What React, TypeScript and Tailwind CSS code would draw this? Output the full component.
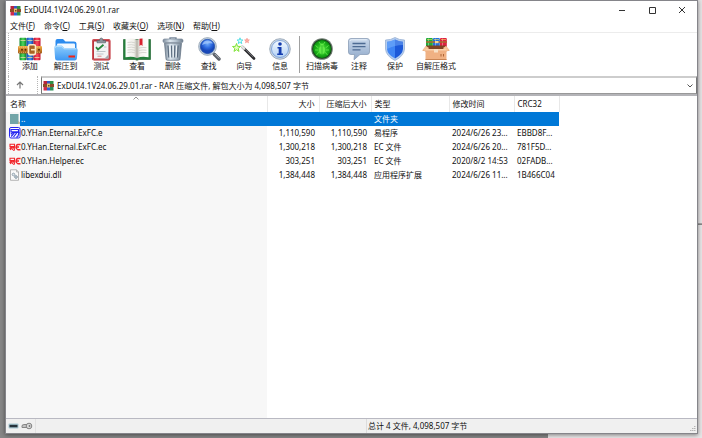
import { useState } from 'react';
import type { ReactNode } from 'react';

type FileRow = {
  name: string;
  icon: 'folder' | 'e' | 'ec' | 'dll';
  size: string;
  packed: string;
  type: string;
  modified: string;
  crc: string;
};

const files: FileRow[] = [
  { name: '..', icon: 'folder', size: '', packed: '', type: '文件夹', modified: '', crc: '' },
  { name: '0.YHan.Eternal.ExFC.e', icon: 'e', size: '1,110,590', packed: '1,110,590', type: '易程序', modified: '2024/6/26 23...', crc: 'EBBD8F...' },
  { name: '0.YHan.Eternal.ExFC.ec', icon: 'ec', size: '1,300,218', packed: '1,300,218', type: 'EC 文件', modified: '2024/6/26 20...', crc: '781F5D...' },
  { name: '0.YHan.Helper.ec', icon: 'ec', size: '303,251', packed: '303,251', type: 'EC 文件', modified: '2020/8/2 14:53', crc: '02FADB...' },
  { name: 'libexdui.dll', icon: 'dll', size: '1,384,448', packed: '1,384,448', type: '应用程序扩展', modified: '2024/6/26 11...', crc: '1B466C04' },
];

const menus = [
  { label: '文件', accel: 'F' },
  { label: '命令', accel: 'C' },
  { label: '工具', accel: 'S' },
  { label: '收藏夹', accel: 'O' },
  { label: '选项', accel: 'N' },
  { label: '帮助', accel: 'H' },
];

function BooksIcon() {
  return (
    <svg viewBox="0 0 24 24" className="size-6" aria-hidden="true">
      <defs>
        <linearGradient id="bookR"><stop offset="0" stopColor="#b01030" /><stop offset=".5" stopColor="#ff4a5e" /><stop offset="1" stopColor="#c0122f" /></linearGradient>
        <linearGradient id="bookG"><stop offset="0" stopColor="#0f8a2c" /><stop offset=".5" stopColor="#4fd85e" /><stop offset="1" stopColor="#0b7a26" /></linearGradient>
        <linearGradient id="bookB"><stop offset="0" stopColor="#1648a8" /><stop offset=".5" stopColor="#3f97f5" /><stop offset="1" stopColor="#123c94" /></linearGradient>
        <linearGradient id="belt" x2="0" y2="1"><stop offset="0" stopColor="#f0b04c" /><stop offset=".5" stopColor="#d08428" /><stop offset="1" stopColor="#9a5414" /></linearGradient>
      </defs>
      <rect x="1.500" y=".8" width="7" height="22.500" rx="1" fill="url(#bookG)" />
      <rect x="8.500" y=".8" width="7" height="22.500" rx="1" fill="url(#bookB)" />
      <rect x="15.500" y=".8" width="7" height="22.500" rx="1" fill="url(#bookR)" />
      <path d="M2.500 3.500h5M9.500 3.500h5M16.500 3.500h5M2.500 20.500h5M9.500 20.500h5M16.500 20.500h5" stroke="#e8d9a0" strokeWidth=".8" />
      <rect x="0" y="9" width="24" height="7.500" rx="1" fill="url(#belt)" />
      <path d="M1 10.200h22M1 15.300h22" stroke="#f8d79c" strokeWidth=".6" strokeDasharray="1 1" />
      <rect x="10.500" y="7.800" width="7" height="9.800" rx="1.500" fill="#a86322" stroke="#fdeccb" strokeWidth="1.600" />
      <path d="M13 12.700h5" stroke="#ffe6b0" strokeWidth="1.600" />
      <circle cx="4" cy="12.700" r="1" fill="#5c2c06" />
      <circle cx="7.500" cy="12.700" r="1" fill="#5c2c06" />
      <circle cx="21" cy="12.700" r="1" fill="#5c2c06" />
    </svg>
  );
}

// Same books, simplified for the title and address bars
function SmallBooksIcon() {
  return (
    <svg viewBox="0 0 11 11" className="size-[11px] shrink-0" aria-hidden="true">
      <path d="M1 1h9v9H1z" fill="#23306e" />
      <path d="M.5 1h3.500v3H.5z" fill="#b8243c" />
      <path d="M4 1h3v3H4z" fill="#3357c4" />
      <path d="M7 1h3.500v3H7z" fill="#2d9145" />
      <path d="M.5 7h3.500v3.500H.5z" fill="#d02c4c" />
      <path d="M4 7h3v3.500H4z" fill="#2f62d6" />
      <path d="M7 7h3.500v3.500H7z" fill="#2b8f55" />
      <path d="M0 4h11v3H0z" fill="#8c4a28" />
      <path d="M4 3.500h3v4H4z" fill="#e9c46c" />
      <path d="M5 5h1.500v1.500H5z" fill="#6e3d1e" />
    </svg>
  );
}

function ExtractIcon() {
  return (
    <svg viewBox="0 0 24 24" className="size-6" aria-hidden="true">
      <defs>
        <linearGradient id="folder" x2="0" y2="1"><stop offset="0" stopColor="#8fcefd" /><stop offset="1" stopColor="#3d97f2" /></linearGradient>
      </defs>
      <path d="M1.500 4Q1.500 2 3.500 2h5.500l2.500 2.500H20q2.500 0 2.500 2V12h-21z" fill="#2b8bee" />
      <rect x="3" y="6.500" width="18" height="8" rx="1" fill="#f2f9ff" />
      <path d="M.3 10.500q0-2 2-2h5.500l2.500 2.500h11.400q2 0 2 2l-.8 8.500q-.2 2-2.200 2H3.300q-2 0-2.200-2z" fill="url(#folder)" />
      <path d="M1 11q.3-1.700 1.700-1.700h4.800L10 11.800h12" fill="none" stroke="#c6e7ff" strokeWidth=".8" />
      <rect x="14.500" y="18.500" width="6.500" height="2" fill="#ee2418" />
    </svg>
  );
}

function TestIcon() {
  return (
    <svg viewBox="0 0 24 24" className="size-6" aria-hidden="true">
      <rect x="3" y="2" width="18.500" height="21.500" rx="2" fill="#b8323c" />
      <rect x="3.600" y="2.600" width="17.300" height="20.200" rx="1.600" fill="none" stroke="#e36b70" strokeWidth=".6" />
      <path d="M5 4.500h14.500v17H5z" fill="#f3f4f5" />
      <path d="M15.500 21.500l4-4v4z" fill="#a3abb1" />
      <path d="M8 5.800V3.500h2.500Q10.500 1 12.300 1T14 3.500h2.500v2.300z" fill="#8b949c" stroke="#555d64" strokeWidth=".6" />
      <path d="M7 10.200l2 2.300 5.500-4.700" fill="none" stroke="#25863a" strokeWidth="1.800" />
      <path d="M7.500 14.500h9M7.500 17h7M15 10h2.500" stroke="#bdc4ca" strokeWidth="1" />
      <path d="M8.500 19.200h4" stroke="#cf6d6d" strokeWidth=".8" />
    </svg>
  );
}

function ViewIcon() {
  return (
    <svg viewBox="0 0 28 24" className="h-6 w-7" aria-hidden="true">
      <defs>
        <linearGradient id="pageL"><stop offset="0" stopColor="#fff" /><stop offset=".75" stopColor="#f0efe9" /><stop offset="1" stopColor="#b5b2a8" /></linearGradient>
        <linearGradient id="pageR"><stop offset="0" stopColor="#b5b2a8" /><stop offset=".25" stopColor="#f4f3ee" /><stop offset="1" stopColor="#fff" /></linearGradient>
      </defs>
      <path d="M.5 2.500H27.500V22.500H16l-2 .8-2-.8H.5z" fill="#24803b" stroke="#145b26" strokeWidth=".6" />
      <path d="M2.500 2Q9 .5 14 2.800V21Q9 18.800 2.500 20.300z" fill="url(#pageL)" />
      <path d="M25.500 2Q19 .5 14 2.800V21Q19 18.800 25.500 20.300z" fill="url(#pageR)" />
      <path d="M4.500 5.500q4-.8 7.500.3M4.500 8q4-.8 7.500.3M4.500 10.500q4-.8 7.500.3M4.500 13q4-.8 7.500.3M4.500 15.500q4-.8 7.500.3M16 11q4-1 7.500-.3M16 13.500q4-1 7.500-.3M16 16q4-1 7.500-.3" fill="none" stroke="#c8c8c3" strokeWidth=".7" />
      <path d="M16.500 1.800l3-.3V9l-1.500-1.300L16.500 9z" fill="#d8212e" />
    </svg>
  );
}

function DeleteIcon() {
  return (
    <svg viewBox="0 0 24 24" className="size-6" aria-hidden="true">
      <defs>
        <linearGradient id="bin"><stop offset="0" stopColor="#7b8a9a" /><stop offset=".35" stopColor="#dce6ee" /><stop offset=".65" stopColor="#b5c3cf" /><stop offset="1" stopColor="#708090" /></linearGradient>
      </defs>
      <path d="M9 2V.8h6V2" fill="none" stroke="#77879a" strokeWidth="1.300" />
      <rect x="2" y="2" width="20" height="3.600" rx="1.500" fill="url(#bin)" stroke="#66768a" strokeWidth=".6" />
      <path d="M3.500 6.200h17L19 22q-.1 1.300-1.500 1.300h-11Q5.100 23.300 5 22z" fill="url(#bin)" stroke="#5e6e80" strokeWidth=".7" />
      <path d="M7 8.500l.8 12M10.500 8.500l.3 12M13.800 8.500l-.3 12M17.200 8.500l-.8 12" stroke="#5a6b7e" strokeWidth="1.200" />
      <path d="M8.600 8.500l.6 12M12.200 8.500v12M15.600 8.500l-.4 12" stroke="#f5f9fc" strokeWidth=".9" />
    </svg>
  );
}

function FindIcon() {
  return (
    <svg viewBox="0 0 24 24" className="size-6" aria-hidden="true">
      <defs>
        <radialGradient id="lens" cy=".3"><stop offset="0" stopColor="#74aefa" /><stop offset=".6" stopColor="#2e6be0" /><stop offset="1" stopColor="#1747b8" /></radialGradient>
      </defs>
      <path d="M15.500 15.500l2.500 2.500" stroke="#9aa3ad" strokeWidth="3" />
      <path d="M17.500 17.500l4.500 4.500" stroke="#5a5f67" strokeWidth="3.400" strokeLinecap="round" />
      <path d="M18 17.200l4 4" stroke="#b4bac1" strokeWidth="1" strokeLinecap="round" />
      <circle cx="10.500" cy="9.500" r="8.900" fill="#c3d2e2" stroke="#8696a6" strokeWidth=".7" />
      <circle cx="10.500" cy="9.500" r="7.200" fill="url(#lens)" stroke="#1b479f" strokeWidth=".6" />
      <path d="M5 8Q6.500 3.500 11 3.600q3.500.1 4.800 2.900Q9.500 5.500 5 8z" fill="#b5d6ff" opacity=".65" />
    </svg>
  );
}

function WizardIcon() {
  return (
    <svg viewBox="0 0 24 24" className="size-6" aria-hidden="true">
      <path d="M10.500 10L22 21.500" stroke="#2b2b2e" strokeWidth="2.600" strokeLinecap="round" />
      <path d="M10.300 9.200l11 11" stroke="#85858c" strokeWidth=".8" />
      <path d="M9.700 9.200l2.300 2.300" stroke="#e4e4e4" strokeWidth="2.600" strokeLinecap="round" />
      <path d="M4.500 6.500l1 2.800 3 .2-2.300 1.900.8 3-2.500-1.700L2 14.400l.8-3L.5 9.500l3-.2z" fill="#e7ffc4" stroke="#80e23a" strokeWidth="1" />
      <path d="M8 .8l.7 2.100 2.200.1-1.700 1.400.6 2.200L8 5.400 6.200 6.600l.6-2.200L5.100 3l2.200-.1z" fill="#d8ffff" stroke="#49dbe2" strokeWidth=".9" />
      <path d="M15 1.200l.6 1.600 1.800.1-1.400 1.200.5 1.700-1.500-1-1.500 1 .5-1.700-1.400-1.200 1.800-.1z" fill="#ffb3a9" stroke="#f4877d" strokeWidth=".6" />
    </svg>
  );
}

function InfoIcon() {
  return (
    <svg viewBox="0 0 24 24" className="size-6" aria-hidden="true">
      <defs>
        <linearGradient id="info" x2="0" y2="1"><stop offset="0" stopColor="#f4faff" /><stop offset="1" stopColor="#b2d0f4" /></linearGradient>
      </defs>
      <circle cx="12" cy="12" r="10.300" fill="#c9d6e4" stroke="#8d9dae" strokeWidth=".8" />
      <circle cx="12" cy="12" r="8.500" fill="url(#info)" stroke="#6d97d6" strokeWidth=".8" />
      <circle cx="12" cy="7" r="1.800" fill="#143cae" />
      <path d="M9.500 10h4v6.500H15V18H9.200v-1.500h1.500v-5H9.500z" fill="#143cae" />
    </svg>
  );
}

function VirusIcon() {
  return (
    <svg viewBox="0 0 24 24" className="size-6" aria-hidden="true">
      <defs>
        <radialGradient id="scan"><stop offset="0" stopColor="#4ee03a" /><stop offset=".65" stopColor="#1fb41b" /><stop offset="1" stopColor="#0b8a10" /></radialGradient>
      </defs>
      <circle cx="12" cy="12" r="10.800" fill="#6d7a70" />
      <circle cx="12" cy="12" r="9.800" fill="#173f19" />
      <circle cx="12" cy="12" r="9" fill="url(#scan)" />
      <path d="M8.500 11L5.500 8.500M15.500 11l3-2.500M8.500 13H5M15.500 13H19M9 15l-2.500 3M15 15l2.500 3M10.500 7L9 5M13.500 7L15 5" stroke="#5fe84a" strokeWidth=".9" />
      <ellipse cx="12" cy="13" rx="3.500" ry="4.300" fill="#62ea48" stroke="#2fbe28" strokeWidth=".6" />
      <path d="M9.500 8.500Q12 4.500 14.500 8.500z" fill="#62ea48" />
      <path d="M12 9v8" stroke="#24a723" strokeWidth=".6" />
    </svg>
  );
}

function CommentIcon() {
  return (
    <svg viewBox="0 0 24 24" className="size-6" aria-hidden="true">
      <defs>
        <linearGradient id="bubble" x2="0" y2="1"><stop offset="0" stopColor="#c9d8eb" /><stop offset="1" stopColor="#8fa8c9" /></linearGradient>
      </defs>
      <path d="M4 1.500h16q2.500 0 2.500 2.500v11q0 2.500-2.500 2.500h-7L7 22.800l.5-5.300H4q-2.500 0-2.500-2.500V4Q1.500 1.500 4 1.500z" fill="url(#bubble)" stroke="#8a9db6" strokeWidth=".8" />
      <path d="M5.500 6.500h13M5.500 9.700h13M5.500 12.900h8" stroke="#4e6b93" strokeWidth="1.300" />
      <path d="M3 4q0-1.200 1.200-1.200h15.600" fill="none" stroke="#f6faff" strokeWidth=".7" />
    </svg>
  );
}

function ProtectIcon() {
  return (
    <svg viewBox="0 0 24 24" className="size-6" aria-hidden="true">
      <path d="M12 .5Q16 3 21.500 3v9Q21 19 12 23.500 3 19 2.500 12V3Q8 3 12 .5z" fill="#b4cdf0" stroke="#8da8cf" strokeWidth=".7" />
      <path d="M12 2.600q3.700 2 8 2.200v7.200q-.5 5.700-8 9.500z" fill="#1c59d9" />
      <path d="M12 2.600Q8.300 4.600 4 4.800V12q.5 5.700 8 9.500z" fill="#3f85f4" />
      <path d="M4 12V4.800Q8.300 4.600 12 2.600q3.700 2 8 2.200V8Q12 8 4 12z" fill="#8fc0ff" opacity=".4" />
    </svg>
  );
}

function SfxIcon() {
  return (
    <svg viewBox="0 0 28 24" className="h-6 w-7" aria-hidden="true">
      <rect x="4" y="1" width="6.800" height="11" rx="1" fill="#1eab3c" />
      <rect x="11" y="1" width="6.800" height="11" rx="1" fill="#2470dc" />
      <rect x="18" y="1" width="6.800" height="11" rx="1" fill="#df2041" />
      <path d="M6.500 1.500v9M13.500 1.500v9M20.500 1.500v9" stroke="#fff" strokeWidth="1" opacity=".35" />
      <path d="M4 5h21" stroke="#a86a30" strokeWidth="1.600" />
      <path d="M13 4h3.500v2.200H13z" fill="#f6d58a" />
      <path d="M5 2.500h5M12 2.500h5M19 2.500h5" stroke="#f2df62" strokeWidth=".6" />
      <path d="M4 9l-3.500 4.500L4 14.500h20l3.500-1L24 9z" fill="#c97f48" />
      <path d="M4 8.500h20L22.500 12H5.500z" fill="#7f4423" />
      <path d="M4 9L.3 13.300l4 1.200L7 11zM24 9l3.700 4.300-4 1.200L21 11z" fill="#f7c397" />
      <path d="M3.500 12h21v11h-21z" fill="#f0b183" />
      <path d="M3.500 12h21v1.500h-21z" fill="#fbd1aa" />
      <path d="M12 12h4v3.500h-4z" fill="#f8e1c7" />
      <path d="M3.500 22.500h21" stroke="#c98453" strokeWidth="1" />
      <path d="M19 19.500v-2.500M21.500 19.500v-2.500" stroke="#a65b2d" strokeWidth=".9" />
    </svg>
  );
}

function FileIcon({ kind }: { kind: FileRow['icon'] }) {
  if (kind === 'folder') {
    return (
      <svg viewBox="0 0 12 12" className="size-3 shrink-0" aria-hidden="true">
        <path d="M1 1h8.500v7.500l1 .5v2H1z" fill="#72a5a8" />
        <path d="M9 8.500l1.500.5v2H9z" fill="#b9b58c" />
      </svg>
    );
  }
  if (kind === 'e') {
    return (
      <svg viewBox="0 0 12 12" className="size-3 shrink-0" aria-hidden="true">
        <rect x=".5" y=".5" width="10.500" height="10.500" rx="1.500" fill="#fff" stroke="#2626f0" strokeWidth="1" />
        <path d="M2 2.500h7.500v2.300H2zM1.800 7.200l2-1.700h6.200L8.700 10H7M5.300 5.800L2.200 9.500M7.700 5.800L4.500 10" fill="none" stroke="#2626f0" strokeWidth="1.200" />
      </svg>
    );
  }
  if (kind === 'ec') {
    return (
      <svg viewBox="0 0 12 12" className="size-3 shrink-0" aria-hidden="true">
        <path d="M1 3.300h4.500v2.200H1zM.5 7.500L2 6.300h4l-.8 3H4M3 6.500L1.200 9M4.700 6.500L3 9" fill="none" stroke="#f2262c" strokeWidth="1.100" />
        <path d="M11.500 3.500H9Q7.200 3.700 7.200 6T9 8.800h2.500M7.500 6H10" fill="none" stroke="#f2262c" strokeWidth="1.400" />
      </svg>
    );
  }
  return (
    <svg viewBox="0 0 12 12" className="size-3 shrink-0" aria-hidden="true">
      <path d="M1.500.8h6L9.500 3v8.300h-8z" fill="#fafafa" stroke="#9a9a9a" strokeWidth=".7" />
      <path d="M7.500.8V3h2" fill="none" stroke="#9a9a9a" strokeWidth=".6" />
      <circle cx="4.500" cy="5.500" r="1.300" fill="#dfe6ea" stroke="#93a4b0" strokeWidth="1" />
      <circle cx="7" cy="8" r="1.300" fill="#dfe6ea" stroke="#8194a1" strokeWidth="1" />
    </svg>
  );
}

function ToolButton({ label, children }: { label: string; children: ReactNode }) {
  return (
    <button type="button" className="flex flex-col items-center whitespace-nowrap leading-[10px]">
      {children}
      <span>{label}</span>
    </button>
  );
}

export default function App() {
  const [selected, setSelected] = useState(0);

  return (
    <div className="relative h-screen overflow-hidden bg-[#868686] pr-1 pb-1 pl-[5px] font-['Noto_Sans','Noto_Sans_CJK_SC',sans-serif] text-[8px] leading-[10px] text-[#111]">
      {/* Windows behind */}
      <div className="absolute top-0 right-0 h-56 w-6 border-b border-[#a5a3a3] bg-[#e4e2e3]" />
      <div className="absolute right-0 bottom-0 h-[213px] w-[154px] bg-[#e6e4e5]" />

      <div className="relative flex h-full flex-col border border-[#85858a] bg-white shadow-[0_1px_4px_rgba(0,0,0,0.45)]">
        {/* Title bar */}
        <header className="flex h-[18px] shrink-0 items-center justify-between pl-1">
          <div className="flex items-center gap-[3px]">
            <SmallBooksIcon />
            <h1>ExDUI4.1V24.06.29.01.rar</h1>
          </div>
          <div className="flex text-[#333]">
            <button type="button" aria-label="最小化" className="flex w-[30px] justify-center">
              <svg viewBox="0 0 8 8" className="size-2"><path d="M1 4.500h6" stroke="currentColor" /></svg>
            </button>
            <button type="button" aria-label="最大化" className="flex w-[30px] justify-center">
              <svg viewBox="0 0 8 8" className="size-2"><path d="M1.500 1.500h6v6h-6z" fill="none" stroke="currentColor" /></svg>
            </button>
            <button type="button" aria-label="关闭" className="flex w-[30px] justify-center">
              <svg viewBox="0 0 8 8" className="size-2"><path d="M1 1l6 6M7 1L1 7" stroke="currentColor" /></svg>
            </button>
          </div>
        </header>

        {/* Menu */}
        <nav className="flex h-[14px] shrink-0 items-center gap-[9px] border-b border-[#ececec] pl-1">
          {menus.map((m) => (
            <button key={m.accel} type="button">
              {m.label}(<span className="underline">{m.accel}</span>)
            </button>
          ))}
        </nav>

        {/* Toolbar */}
        <div className="flex h-[43px] shrink-0 pl-[2px]">
          <div className="w-1 border-l border-dotted border-[#b5b5b5]" />
          <div className="grid w-[286px] grid-cols-8 pt-1">
            <ToolButton label="添加"><BooksIcon /></ToolButton>
            <ToolButton label="解压到"><ExtractIcon /></ToolButton>
            <ToolButton label="测试"><TestIcon /></ToolButton>
            <ToolButton label="查看"><ViewIcon /></ToolButton>
            <ToolButton label="删除"><DeleteIcon /></ToolButton>
            <ToolButton label="查找"><FindIcon /></ToolButton>
            <ToolButton label="向导"><WizardIcon /></ToolButton>
            <ToolButton label="信息"><InfoIcon /></ToolButton>
          </div>
          <div className="my-[3px] ml-px w-px bg-[#a0a0a0]" />
          <div className="grid grid-cols-[44px_30px_42px_40px] pt-1">
            <ToolButton label="扫描病毒"><VirusIcon /></ToolButton>
            <ToolButton label="注释"><CommentIcon /></ToolButton>
            <ToolButton label="保护"><ProtectIcon /></ToolButton>
            <ToolButton label="自解压格式"><SfxIcon /></ToolButton>
          </div>
        </div>

        {/* Address bar */}
        <div className="flex h-[18px] shrink-0 pl-[2px]">
          <button type="button" aria-label="向上" className="flex w-[22px] items-center justify-center border-l border-dotted border-[#b5b5b5] text-[#777]">
            <svg viewBox="0 0 8 8" className="size-2"><path d="M4 7.500V1M1 4l3-3 3 3" fill="none" stroke="currentColor" strokeWidth="1.200" /></svg>
          </button>
          <div className="ml-[7px] w-1 border-l border-dotted border-[#b5b5b5]" />
          <button type="button" className="flex min-w-0 flex-1 items-center gap-[3px] border border-t-2 border-t-[#cdcdcd] border-r-[#777] border-b-[#999] border-l-[#777] pr-[2px] pl-px">
            <SmallBooksIcon />
            <span className="flex-1 truncate text-left">ExDUI4.1V24.06.29.01.rar - RAR 压缩文件, 解包大小为 4,098,507 字节</span>
            <svg viewBox="0 0 8 8" className="size-2"><path d="M1.500 2.500L4 5l2.500-2.500" fill="none" stroke="#555" /></svg>
          </button>
        </div>

        {/* File list */}
        <main className="flex min-h-0 flex-1 flex-col border-t-2 border-[#b4b4b8]">
          <table className="w-[553px] table-fixed border-collapse text-left whitespace-nowrap">
            <colgroup>
              <col className="w-[261px]" />
              <col className="w-[52px]" />
              <col className="w-[52px]" />
              <col className="w-[78px]" />
              <col className="w-[65px]" />
              <col className="w-[45px]" />
            </colgroup>
            <thead>
              <tr className="h-4">
                <th className="relative border-r border-[#e8e8e8] p-0 pl-1 font-normal">
                  名称
                  <svg viewBox="0 0 6 4" className="absolute top-0 left-1/2 h-1 w-[6px] -translate-x-1/2" aria-hidden="true"><path d="M.5 3.500L3 1l2.500 2.500" fill="none" stroke="#777" strokeWidth=".8" /></svg>
                </th>
                <th className="border-r border-[#e8e8e8] p-0 pr-1 text-right font-normal">大小</th>
                <th className="border-r border-[#e8e8e8] p-0 pr-1 text-right font-normal">压缩后大小</th>
                <th className="border-r border-[#e8e8e8] p-0 pl-[3px] font-normal">类型</th>
                <th className="border-r border-[#e8e8e8] p-0 pl-[3px] font-normal">修改时间</th>
                <th className="border-r border-[#e8e8e8] p-0 pl-[3px] font-normal">CRC32</th>
              </tr>
            </thead>
            <tbody>
              {files.map((f, i) => (
                <tr
                  key={f.name}
                  onClick={() => setSelected(i)}
                  className={i === selected ? 'h-[14px] bg-[#0078d7] text-white' : 'h-[14px]'}
                >
                  <td className={i === selected ? 'bg-[linear-gradient(to_right,#f7f7f7_14px,#0078d7_14px)] p-0' : 'bg-[#f7f7f7] p-0'}>
                    <div className="flex items-center pl-[3px]">
                      <FileIcon kind={f.icon} />
                      <span>{f.name}</span>
                    </div>
                  </td>
                  <td className="p-0 pr-1 text-right">{f.size}</td>
                  <td className="p-0 pr-1 text-right">{f.packed}</td>
                  <td className="p-0 pl-[3px]">{f.type}</td>
                  <td className="p-0 pl-[3px]">{f.modified}</td>
                  <td className="p-0 pl-[3px]">{f.crc}</td>
                </tr>
              ))}
            </tbody>
          </table>
          <div className="w-[261px] flex-1 bg-[#f7f7f7]" />
        </main>

        {/* Status bar */}
        <footer className="grid h-[15px] shrink-0 grid-cols-[361px_1fr] border-t border-[#b9b9c2] bg-[#f0f0f0]">
          <div className="flex items-center gap-[2px] border-r border-[#dcdcdc] pl-[2px]">
            <svg viewBox="0 0 11 8" className="h-2 w-[11px]" aria-hidden="true">
              <rect x=".5" y="1.500" width="10" height="5" rx="1" fill="#a9c8d2" />
              <rect x="1.500" y="2.800" width="8" height="2.500" fill="#26333c" />
            </svg>
            <svg viewBox="0 0 12 8" className="h-2 w-3" aria-hidden="true">
              <path d="M1 2.500h6v3.500H1z" fill="#c4c4c4" />
              <path d="M1 3.500L3 2.500h4M1 5.500h6M1 3.500v2" fill="none" stroke="#858585" strokeWidth="1" />
              <circle cx="8" cy="4" r="2.800" fill="#d9d9d9" stroke="#777" strokeWidth=".9" />
              <circle cx="8.500" cy="4" r=".9" fill="#777" />
            </svg>
            <div className="h-full w-px bg-[#e2e2e2]" />
          </div>
          <div className="flex items-center justify-between pl-px">
            <span>总计 4 文件, 4,098,507 字节</span>
            <svg viewBox="0 0 8 8" className="size-2 self-end" aria-hidden="true">
              <path d="M5 1.500h1.500M3 3.500h1.500M5 3.500h1.500M1 5.500h1.500M3 5.500h1.500M5 5.500h1.500" stroke="#b5b5b5" strokeWidth="1.200" />
            </svg>
          </div>
        </footer>
      </div>
    </div>
  );
}
